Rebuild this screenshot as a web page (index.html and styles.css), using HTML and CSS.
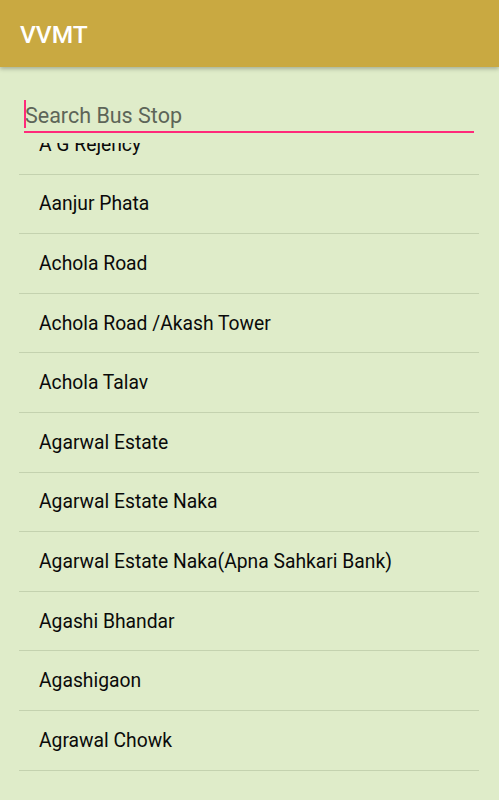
FILE: index.html
```html
<!DOCTYPE html>
<html lang="en">
<head>
  <meta charset="UTF-8">
  <meta name="viewport" content="width=device-width, initial-scale=1.0">
  <title>VVMT</title>
  <link rel="stylesheet" href="styles.css">
</head>
<body>
  <div class="app-bar">
    <h1>VVMT</h1>
  </div>

  <!-- Search field -->
  <div class="search">
    <span class="caret"></span>
    <input type="text" id="searchStop" placeholder="Search Bus Stop">
  </div>

  <!-- Bus stop list -->
  <div class="stop-list">
    <ul>
      <li>A G Rejency</li>
      <li>Aanjur Phata</li>
      <li>Achola Road</li>
      <li>Achola Road /Akash Tower</li>
      <li>Achola Talav</li>
      <li>Agarwal Estate</li>
      <li>Agarwal Estate Naka</li>
      <li>Agarwal Estate Naka(Apna Sahkari Bank)</li>
      <li>Agashi Bhandar</li>
      <li>Agashigaon</li>
      <li>Agrawal Chowk</li>
    </ul>
  </div>
</body>
</html>
```
FILE: styles.css
```css
body {
  font-family: Roboto, "Noto Sans", Arial, sans-serif;
  background-color: #dfecc9;
  margin: 0;
  padding: 0;
  height: 800px;
  overflow: hidden;
}
.app-bar {
  height: 67px;
  background-color: #c9a941; /* Mustard */
  box-shadow: 0 2px 4px rgba(0, 0, 0, 0.25);
  display: flex;
  align-items: center;
  padding-left: 20px;
  position: relative;
  z-index: 1;
}
.app-bar h1 {
  margin: 1px 0 0 0;
  color: #ffffff;
  font-size: 24.5px;
  font-weight: 500;
}
/* Search field */
.search {
  position: relative;
  margin: 33px 25px 0 24px;
  border-bottom: 2px solid #ff2a7a;
}
.search input {
  display: block;
  width: 100%;
  height: 31px;
  box-sizing: border-box;
  padding: 0 0 0 1px;
  border: none;
  outline: none;
  background: transparent;
  font-family: Roboto, "Noto Sans", Arial, sans-serif;
  font-size: 21.5px;
  color: #111;
}
.search input::placeholder {
  color: #5d6558;
}
.caret {
  position: absolute;
  left: 0;
  top: 0;
  width: 2px;
  height: 28px;
  background-color: #ff2a7a;
}
/* List */
.stop-list {
  margin: 10px 20px 0 19px;
  height: 640px;
  overflow: hidden;
}
.stop-list ul {
  list-style: none;
  margin: -28px 0 0 0;
  padding: 0;
}
.stop-list li {
  height: 59.6px;
  box-sizing: border-box;
  display: flex;
  align-items: center;
  padding-left: 20px;
  border-bottom: 1px solid #c4d2af;
  font-size: 19.3px;
  color: #0a0a0a;
}
```
